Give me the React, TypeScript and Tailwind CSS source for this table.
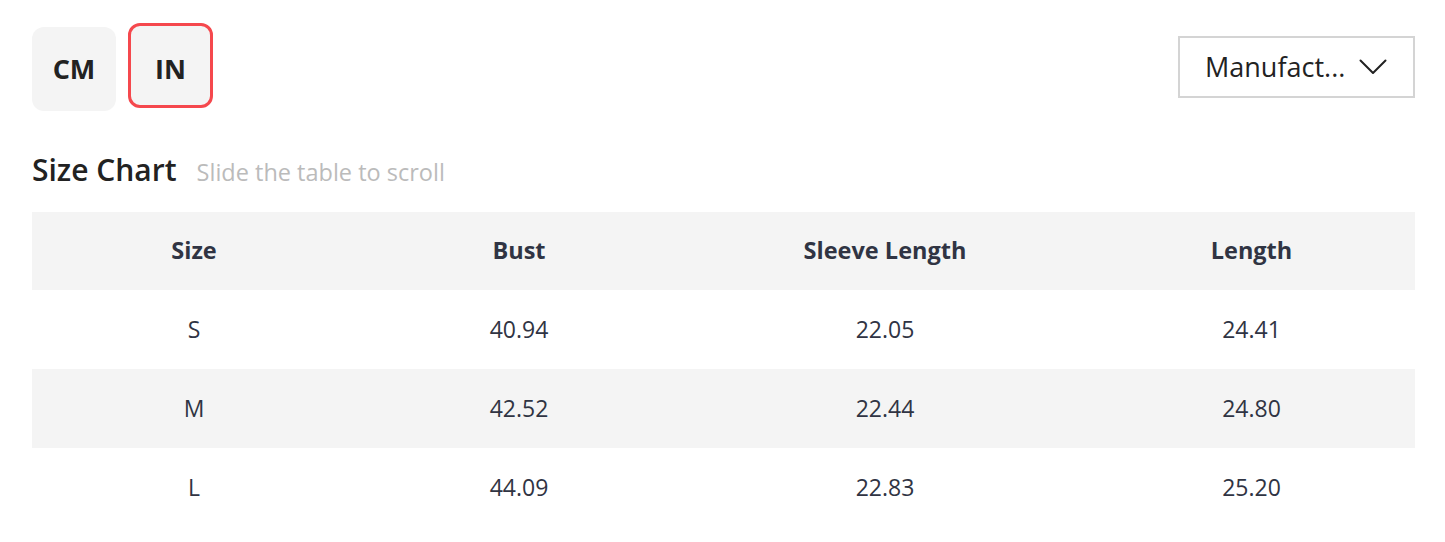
const rows = [
  { size: "S", bust: "40.94", sleeve: "22.05", length: "24.41" },
  { size: "M", bust: "42.52", sleeve: "22.44", length: "24.80" },
  { size: "L", bust: "44.09", sleeve: "22.83", length: "25.20" },
];

const cols = "grid grid-cols-[324px_326px_406px_1fr]";

export default function App() {
  return (
    <div className="w-[1445px] h-[542px] bg-white pl-8 pr-[30px] font-['Open_Sans',sans-serif] text-[#222]">
      {/* unit toggle + dropdown */}
      <div className="flex items-start justify-between">
        <div className="flex items-start gap-3">
          <button className="mt-[27px] w-[84px] h-[84px] rounded-xl bg-[#f4f4f4] text-[27px] font-bold text-[#222] flex items-center justify-center">
            CM
          </button>
          <button className="mt-[23px] w-[85px] h-[85px] pt-[8px] rounded-xl bg-[#f4f4f4] border-[3px] border-[#f5484d] text-[27px] font-bold text-[#222] flex items-center justify-center">
            IN
          </button>
        </div>
        <div className="mt-9 w-[237px] h-[62px] border-2 border-[#d4d4d4] flex items-center justify-between pl-[25px] pr-[26px]">
          <span className="text-[27px] text-[#222]">Manufact...</span>
          <svg width="28" height="16" viewBox="0 0 28 16" fill="none">
            <polyline points="1.5,1.5 14,14 26.5,1.5" stroke="#222" strokeWidth="2" strokeLinecap="round" strokeLinejoin="round" />
          </svg>
        </div>
      </div>

      {/* title */}
      <div className="mt-[38px] flex items-baseline gap-[20px]">
        <h2 className="text-[30px] font-semibold leading-[42px] text-[#222]">Size Chart</h2>
        <span className="text-[23.5px] text-[#bbbbbb]">Slide the table to scroll</span>
      </div>

      {/* table */}
      <div className="mt-[21px] w-[1383px]">
        <div className={`${cols} h-[78px] bg-[#f4f4f4] items-center text-center text-[23.5px] font-bold text-[#303443]`}>
          <div>Size</div>
          <div>Bust</div>
          <div>Sleeve Length</div>
          <div>Length</div>
        </div>
        {rows.map((r, i) => (
          <div
            key={r.size}
            className={`${cols} h-[79px] items-center text-center text-[23px] text-[#303443] ${
              i % 2 === 1 ? "bg-[#f4f4f4]" : "bg-white"
            }`}
          >
            <div>{r.size}</div>
            <div>{r.bust}</div>
            <div>{r.sleeve}</div>
            <div>{r.length}</div>
          </div>
        ))}
      </div>
    </div>
  );
}
